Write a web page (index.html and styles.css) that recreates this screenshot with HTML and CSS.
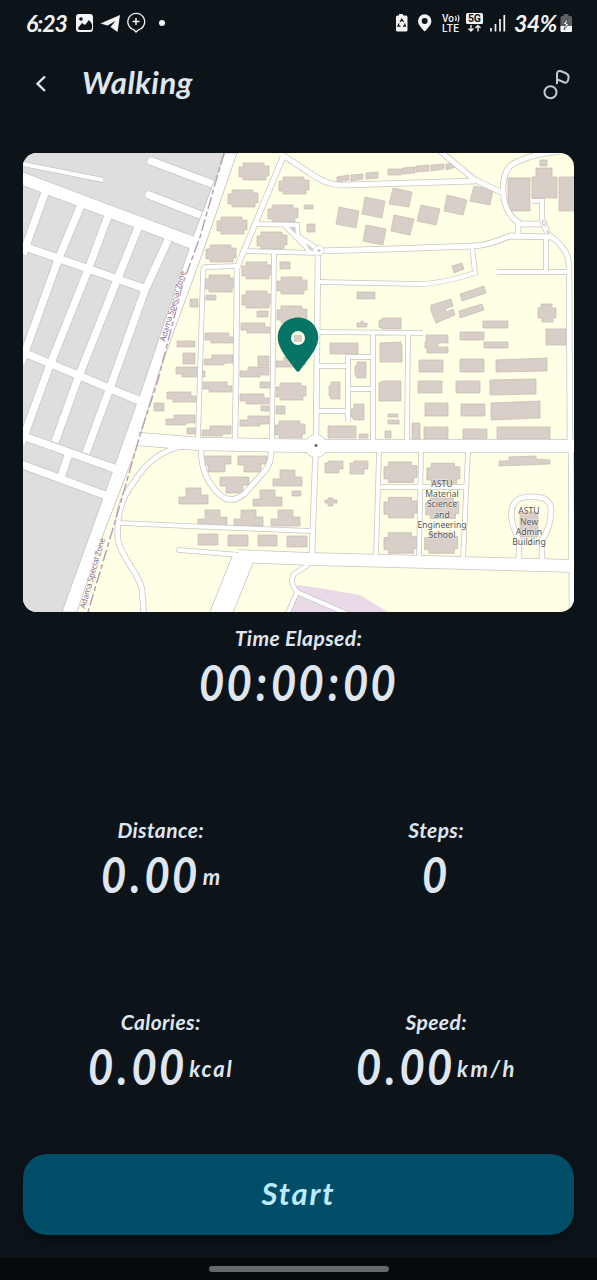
FILE: index.html
```html
<!DOCTYPE html>
<html lang="en">
<head>
<meta charset="utf-8">
<title>Walking</title>
<link rel="stylesheet" href="styles.css">
</head>
<body>
<div class="screen">
  <div class="status">
    <span class="clock">6:23</span>
    <svg class="left-icons" width="94" height="24" viewBox="74 11 94 24">
      <rect x="76" y="14" width="17" height="18" rx="3" fill="#f4f4f4"/>
      <path d="M78 28l4-5 3 2 4-5 3 4v4q0 2-2 2H80q-2 0-2-2z" fill="#0c1319"/><circle cx="81" cy="19" r="1.8" fill="#0c1319"/>
      <path d="M100.500 23.500L120 15l-2.500 17-7-5 5-6-8 4.500z" fill="#f4f4f4"/>
      <path d="M134 29.800a8.400 8.400 0 1 1 4.500 0L136 32z" fill="none" stroke="#f4f4f4" stroke-width="1.300"/>
      <path d="M132.500 21.500h7M136 18v7" stroke="#f4f4f4" stroke-width="1.500"/>
      <circle cx="162" cy="23" r="3" fill="#f4f4f4"/>
    </svg>
    <svg class="right-icons" width="114" height="24" viewBox="394 11 114 24">
      <path d="M399 14h4v1.500h3q1.500 0 1.500 1.500v13q0 1.500-1.500 1.500h-8.500q-1.500 0-1.500-1.500V17q0-1.500 1.500-1.500h1.500z" fill="#f4f4f4"/>
      <path d="M400 22l1.800-2.800 1.800 2.800M404.500 23.500l1 2.700h-2.500M400.500 26.200h-2.700l1.200-2.700" fill="none" stroke="#0c1319" stroke-width="1.200"/>
      <path d="M424.700 14.200a6.700 6.700 0 0 1 6.700 6.700c0 4-4.500 8-6.700 10.600-2.200-2.600-6.700-6.600-6.700-10.600a6.700 6.700 0 0 1 6.700-6.700z" fill="#f4f4f4"/><circle cx="424.700" cy="21" r="3" fill="#0c1319"/>
      <text x="442" y="22" textLength="12" class="net">Vo</text>
      <path d="M455.500 16q1.500 2.500 0 5M457.800 15q2.200 3.500 0 7" fill="none" stroke="#f4f4f4" stroke-width="1.100"/>
      <text x="442" y="32" textLength="17" class="net">LTE</text>
      <rect x="466" y="13" width="17" height="11" rx="1.500" fill="#f4f4f4"/>
      <text x="468" y="22.300" textLength="13" class="five">5G</text>
      <path d="M471 25v6m-2.500-2.500L471 31l2.500-2.500M478 31.500v-6m-2.500 2.500l2.500-2.500 2.500 2.500" fill="none" stroke="#f4f4f4" stroke-width="1.300"/>
      <path d="M491 28v3.500M495.500 24v7.500M500 19v12.500M504.300 15v16.500" stroke="#f4f4f4" stroke-width="1.700"/>
    </svg>
    <span class="percent">34%</span>
    <svg width="13" height="20" viewBox="560 13 13 20">
      <path d="M563.500 14h5v2h2q1.500 0 1.500 1.500v13q0 1.500-1.500 1.500h-8.500q-1.500 0-1.500-1.500v-13q0-1.500 1.500-1.500h1.500z" fill="#5d6267"/>
      <path d="M560.500 26h11.500v4.500q0 1.500-1.500 1.500h-8.500q-1.500 0-1.500-1.500z" fill="#f4f4f4"/>
      <path d="M568 17.500l-5 7h2.500L564 30l5-6.500h-2.500z" fill="#fff" stroke="#2b3035" stroke-width=".7"/>
    </svg>
  </div>

  <div class="header">
    <svg width="14" height="20" viewBox="34 74 14 20"><path d="M45 76.500L37.500 83.700 45 91" fill="none" stroke="#dfe6ef" stroke-width="2.400"/></svg>
    <h1>Walking</h1>
    <svg class="route" width="28" height="32" viewBox="542 68 28 32" fill="none" stroke="#c3cad4" stroke-width="2">
      <circle cx="550.500" cy="92.300" r="6"/>
      <path d="M557 84V73.500q.5-3 3.500-2.500l5 2q3.500 1.500 3 4.500-.3 5.500-3.500 5.200L557.500 79.500"/>
    </svg>
  </div>

  <svg class="map" width="551" height="459" viewBox="23 153 551 459">
    <defs>
      <path id="house" d="M4 0H25V3H30V13H27V17H4V14H0V4H4z"/>
      <path id="hut" d="M7 0H22V7H29V16H0V9H7z"/>
      <path id="tee" d="M0 0H29V8H23V16H6V9H0z"/>
      <path id="strip" d="M0 0H24V4H29V10H6V7H0z"/>
      <path id="strip2" d="M8 0H29V8H20V10H0V4H8z"/>
      <g id="city">
        <path class="r12" d="M18 177L196 244"/>
        <path class="r4" d="M18 163L103 180"/>
        <path class="r7 round" d="M151 161L215 185M149 195L208 218"/>
        <path class="r7" d="M20 245L146 289M20 351L140 401M20 435L116 469M20 464L110 497"/>
        <path class="r7" d="M46 190L23 254M81 205L58 260 21 363M108 216L88 270 48 370 21 444M138 228L117 280 78 378 55 442M168 240L145 290 110 388 86 453M69 453L61 477"/>
      </g>
      <g id="roads">
        <path class="r5" d="M283 157L243 253 237 268 236 380 235 440"/>
        <path class="r5" d="M281 154L310 173Q327 186 345 185L475 181M440 151L475 180 503 193"/>
        <path class="r5" d="M562 151Q530 154 513 164Q503 170 503 190Q504 213 518 222V235M518 224H544"/>
        <path class="r4" d="M532 201H542V222"/>
        <path class="r5" d="M542 220L548 234Q569 249 569 265L570 446"/>
        <path class="r5" d="M318 251L390 249 472 246Q487 246 510 236L550 237"/>
        <path class="r4" d="M472 246L475 273Q440 284 418 284L320 282"/>
        <path class="r4" d="M546 236V272M497 272H569"/>
        <path class="r4" d="M256 224L297 225 298 236 318 249M285 226L311 252M244 251L318 253"/>
        <path class="r5" d="M318 252L316 440 312 553"/>
        <path class="r4" d="M274 253L272 440M237 266L206 267Q203 267 203 273L198 438"/>
        <path class="r4" d="M318 332L423 333M373 333V440M318 366H347M373 357H348V422M347 389H373M318 411H347M408 334L407 440"/>
        <path class="r13" d="M138 439L200 444 316 446 576 446"/>
        <circle cx="316" cy="446" r="9" class="r1"/>
        <path class="r5" d="M184 446Q153 451 134 482C116 504 117 528 118 540C121 558 140 574 142 590L144 616"/>
        <path class="r4" d="M120 523L210 527 312 531"/>
        <path class="r5" d="M201 450Q201 475 217 492Q230 506 244 494L264 472Q272 463 271 450"/>
        <path class="r4 round" d="M179 550L240 555"/>
        <path class="r12" d="M238 556L310 559 390 561 576 566"/>
        <path class="r20" d="M244 556L220 616"/>
        <path class="r4" d="M308 565L294 574Q289 582 297 592L350 615M297 592L287 615"/>
        <path class="r4" d="M379 452L376 556M421 452L419 557M468 452L463 558M378 487H465"/>
        <path class="r5" d="M519 560V540C510 522 509 510 515 502Q521 496 531 497Q551 496 551 510Q551 527 542 540V561M571 446L572 616"/>
      </g>
    </defs>
    <rect x="23" y="153" width="551" height="459" fill="#ffffe5"/>
    <path d="M23 153H226L62 612H23z" fill="#dedede"/>
    <path d="M297 585L313 587 360 595 388 612H289z" fill="#ead9e6"/>
    <use href="#city" class="case"/><use href="#city" class="fill"/>
    <g class="bld">
      <use href="#house" x="239" y="163"/><use href="#house" x="279" y="177"/><use href="#house" x="228" y="190"/><use href="#house" x="268" y="205"/><use href="#house" x="217" y="217"/><use href="#house" x="257" y="232"/><use href="#house" x="206" y="245"/><use href="#house" x="242" y="262"/><use href="#house" x="205" y="275"/><use href="#house" x="277" y="277"/><use href="#house" x="242" y="291"/><use href="#house" x="277" y="306"/><use href="#house" x="276" y="383"/><use href="#house" x="275" y="421"/>
      <use href="#strip" x="205" y="333"/><use href="#strip2" x="204" y="355"/><use href="#strip" x="241" y="323"/><use href="#strip2" x="240" y="367"/><use href="#strip" x="203" y="382"/><use href="#strip" x="240" y="394"/><use href="#strip2" x="240" y="416"/><use href="#strip2" x="202" y="426"/><use href="#strip2" x="276" y="357"/>
      <use href="#strip" x="167" y="392"/><use href="#strip2" x="166" y="415"/><use href="#strip" x="176" y="367"/>
      <use href="#tee" x="202" y="456"/><use href="#tee" x="238" y="456"/><use href="#tee" x="220" y="477"/>
      <use href="#hut" x="273" y="470"/><use href="#hut" x="253" y="490"/><use href="#hut" x="179" y="488"/><use href="#hut" x="198" y="510"/><use href="#hut" x="234" y="510"/><use href="#hut" x="271" y="510"/>
      <g transform="translate(384 462) scale(1.1 1.2)"><use href="#house"/><use href="#house" y="29.500"/><use href="#house" y="59"/><use href="#house" x="39" y="1"/><use href="#house" x="38" y="30"/><use href="#house" x="37" y="59"/></g>
      <path d="M304 205h9v4h-9zM307 224h8v8h-8zM280 262h10v7h-10zM206 295h10v5h-10zM257 311h11v6h-11zM258 356h11v10h-11zM260 382h10v6h-10zM276 406h9v8h-9zM261 406h8v5h-8zM190 299h8v8h-8zM177 341h18v6h-18zM183 353h12v11h-12zM154 403h10v8h-10zM187 428h9v6h-9zM292 491h9v5h-9z"/>
      <path d="M198 534h20v11h-20zM228 535h20v11h-20zM258 535h19v11h-19zM287 536h20v11h-20z"/>
      <path d="M357 292h18v7h-18zM330 343h28v11h-28zM328 426h28v12h-28zM359 434h9v4h-9zM357 327v-4h4v-2h2v2h4v4zM379 327v-6l4-3h18v11h-18zM380 343l21-1v3h1v17h-22zM379 383l4-2h18v20h-22zM357 362h9v16h-9l-2-4v-8h2zM331 382h9v17h-9l-2-4v-9h2zM354 404h10v16h-10l-3-4v-7h3zM388 414h10v3h-10zM388 420h11v4h-11zM385 431h6v7h-6z"/>
      <path d="M337 177l12-2v5l-12 2zM351 175l12-1v5l-12 2zM366 173l12-1v6l-12 1zM388 169h13v6h-13zM402 168l13-1v6l-13 1zM416 166l13-1v6l-13 1zM431 165l13-1v5l-13 2zM446 164l10-1 3 3-13 4z"/>
      <path d="M339 207l20 4-3 17-20-4zM365 197l20 4-3 17-20-4zM366 225l20 4-3 16-20-4zM393 188l19 4-3 15-20-3zM394 215l20 4-4 16-19-4zM421 205l19 4-4 16-19-4zM447 195l20 5-4 15-19-4zM474 186l19 4-3 15-20-4zM452 266l10-3 2 6-10 4z"/>
      <path d="M508 178h22v33h-22zM532 177h4v-9h16v9h5v21h-25zM559 177h16v34h-16zM540 160h7v6h-7z"/>
      <path d="M431 305l20-6 2 7-8 3 1 3 7-3 2 6-19 8-5-12zM460 294l24-8 2 7-24 8zM459 311l23-7 2 6-24 8zM483 321h25v7h-25zM460 332h24v8h-24zM484 342h24v6h-24zM426 335h22v8h-10v4h10v6h-21v-5h-2v-6h1zM541 304h11v4h4v10h-3v4h-11v-4h-4v-10h3zM546 329h20v16h-20z"/>
      <path d="M419 360h24v12h-24zM460 359h24v13h-24zM496 360l51-2v13l-51 1zM418 381h24v12h-24zM456 381h24v12h-24zM490 380l46-1v15l-46 1zM425 403h23v13h-23zM461 404h24v12h-24zM491 403l49-2v17l-49 2zM412 423h8v16h-8zM424 427h24v12h-24zM463 429h24v10h-24zM497 427h53v12h-53z"/>
      <path d="M499 461h10v-4l27-1v3l14 1v4l-51 2zM520 512h18v25h-18zM328 461h15v8h-4v4h-14v-10h3zM354 461h14v8h-4v5h-14v-11h4zM325 500h3v-2h5v2h4v3h-4v3h-5v-3h-3z"/>
    </g>
    <path d="M225 153L193 237 189 249 145 380 112 473 62 612H77L103 535 135 452 158 375 200 260 237 153z" fill="#fff" stroke="#bdbdba" stroke-width=".8"/>
    <path d="M184 239.500L196 244M139 286.500L148 289.700M131 397L141 401.500M109 466.500L118 470M102 494L112 497.500" stroke="#fff" stroke-width="7.500"/>
    <path d="M183 239.100L196 244" stroke="#fff" stroke-width="12"/>
    <use href="#roads" class="case"/><use href="#roads" class="fill"/>
    <path d="M224 153L200 237 183 283 158 380 140 435 117 515 88 612" fill="none" stroke="#b9a0b8" stroke-width="1.500" stroke-dasharray="12 3 5 3"/>
    <circle cx="544" cy="223" r="3.500" fill="#fff" stroke="#c6c6c2" stroke-width=".6"/><circle cx="544" cy="223" r="1.800" fill="#fff" stroke="#b5b5b5" stroke-width=".8"/>
    <circle cx="319" cy="250.500" r="5" fill="#fff" stroke="#c6c6c2" stroke-width=".6"/><path d="M311 249h12v4.500h-12z" fill="#fff"/>
    <circle cx="319" cy="250.500" r="1.700" fill="#ccc"/><path d="M307 245l7 6-4-1zM291 228h4v4zM547 230l3 4h-3z" fill="#ddd" stroke="#bbb" stroke-width=".5"/>
    <circle cx="316" cy="445.500" r="1.500" fill="#5c7064"/>
    <g class="zone">
      <text transform="translate(165 342) rotate(-73.500)" textLength="73">Adama Special Zone</text>
      <text transform="translate(85 609) rotate(-74)" textLength="73">Adama Special Zone</text>
    </g>
    <g class="place">
      <text x="442" y="487">ASTU</text><text x="442" y="497">Material</text><text x="442" y="507">Science</text><text x="442" y="517.500">and</text><text x="442" y="528">Engineering</text><text x="442" y="538">School</text>
      <text x="529" y="514">ASTU</text><text x="529" y="524.500">New</text><text x="529" y="535">Admin</text><text x="529" y="545">Building</text>
    </g>
    <path d="M294 335h8v7h-8z" fill="#d9cfc9"/>
    <path fill-rule="evenodd" d="M298 317.500c11.500 0 20.300 8.800 20.300 20 0 12-13 24.500-18.300 33q-2 2.500-4 0c-5.300-8.500-18.300-21-18.300-33 0-11.200 8.800-20 20.300-20zM298 331a7 7 0 1 0 0 14 7 7 0 0 0 0-14z" fill="#067565"/>
  </svg>

  <div class="metric elapsed">
    <div class="label"><span>Time Elapsed:</span></div>
    <div class="value"><span class="num timer">00<i>:</i>00<i>:</i>00</span></div>
  </div>
  <div class="grid">
    <div class="metric"><div class="label">Distance:</div><div class="value"><span class="num">0<i>.</i>00</span><span class="unit">m</span></div></div>
    <div class="metric"><div class="label">Steps:</div><div class="value"><span class="num single">0</span></div></div>
    <div class="metric"><div class="label">Calories:</div><div class="value"><span class="num">0<i>.</i>00</span><span class="unit wide">kcal</span></div></div>
    <div class="metric"><div class="label">Speed:</div><div class="value"><span class="num">0<i>.</i>00</span><span class="unit wider">km/h</span></div></div>
  </div>
  <button class="start">Start</button>
  <div class="nav"><div class="handle"></div></div>
</div>
</body>
</html>
```
FILE: styles.css
```css
* { box-sizing: border-box; }
body { margin: 0; background: #0c1319; }
.screen {
  width: 597px; height: 1280px; overflow: hidden;
  display: flex; flex-direction: column;
  background: #0c1319; color: #dfe6ef;
  font-family: Lato, "Open Sans", sans-serif; font-style: italic; font-weight: 700;
}
.status { height: 46px; padding: 0 24px 0 26px; display: flex; align-items: center; color: #f4f4f4; font-size: 23px; flex: none; }
.clock { width: 48px; letter-spacing: -1px; }
.right-icons { margin-left: auto; margin-right: 6px; }
.percent { width: 46px; letter-spacing: -.5px; }
.net { font: 500 10px Roboto, sans-serif; fill: #f4f4f4; }
.five { font: 700 10.500px Roboto, sans-serif; fill: #0c1319; }
.header { height: 107px; padding: 0 27px 31px 34px; display: flex; align-items: center; flex: none; }
.header h1 { margin: 0 0 4px 34px; font-size: 31px; line-height: 40px; font-weight: 700; letter-spacing: .5px; }
.route { margin-left: auto; margin-top: 0; }
.map { display: block; margin: 0 23px; border-radius: 14px; flex: none; }
.case { --e: 1.500px; stroke: #c6c6c2; fill: none; }
.fill { --e: 0px; stroke: #fff; fill: #fff; fill-opacity: 0; }
.r1 { stroke-width: calc(4px + var(--e)); fill: #fff; fill-opacity: 1; }
.r4 { stroke-width: calc(4px + var(--e)); }
.r5 { stroke-width: calc(4.800px + var(--e)); }
.r7 { stroke-width: calc(7.500px + var(--e)); }
.r12 { stroke-width: calc(12px + var(--e)); }
.r13 { stroke-width: calc(12.500px + var(--e)); }
.r20 { stroke-width: calc(21px + var(--e)); }
.round { stroke-linecap: round; }
.bld { fill: #d9cfc9; stroke: #c5b9b0; stroke-width: .7; }
.zone text { font: 400 8px "Noto Sans", sans-serif; fill: #8b6d8b; stroke: #fff; stroke-width: 1.200px; stroke-opacity: .7; paint-order: stroke; }
.place text { font: 400 8.600px "Noto Sans", sans-serif; fill: #555; text-anchor: middle; stroke: #fff; stroke-width: 1px; stroke-opacity: .6; paint-order: stroke; }
.metric { display: flex; flex-direction: column; align-items: center; }
.elapsed { height: 192px; padding-top: 10px; flex: none; }
.label { font-size: 21px; line-height: 32px; letter-spacing: .4px; }
.value { display: flex; align-items: center; height: 57px; }
.num { font-size: 50px; line-height: 57px; letter-spacing: 2.600px; transform: scaleX(.87); transform-origin: left; margin-right: -15px; }
.num i { padding: 0 2px; }
.timer { margin-right: -30px; }
.single { margin-right: -4px; }
.unit { font-size: 22px; line-height: 30px; margin: 5px 0 0 3px; }
.wide { letter-spacing: 1.800px; }
.wider { letter-spacing: 2.500px; }
.grid { display: grid; grid-template-columns: 1fr 1fr; grid-auto-rows: 192px; margin: 0 23px; padding-top: 10px; height: 350px; flex: none; }
.start { margin: 0 23px; padding: 0 0 4px; height: 81px; border: 0; border-radius: 24px; background: #004d68; color: #bdeaff; font: italic 700 31px Lato, sans-serif; letter-spacing: 1.800px; box-shadow: 0 4px 9px #0006; flex: none; }
.nav { margin-top: auto; height: 22px; padding-top: 8px; background: #060a0d; display: flex; justify-content: center; }
.handle { width: 180px; height: 6px; border-radius: 3px; background: #65696c; }
```
